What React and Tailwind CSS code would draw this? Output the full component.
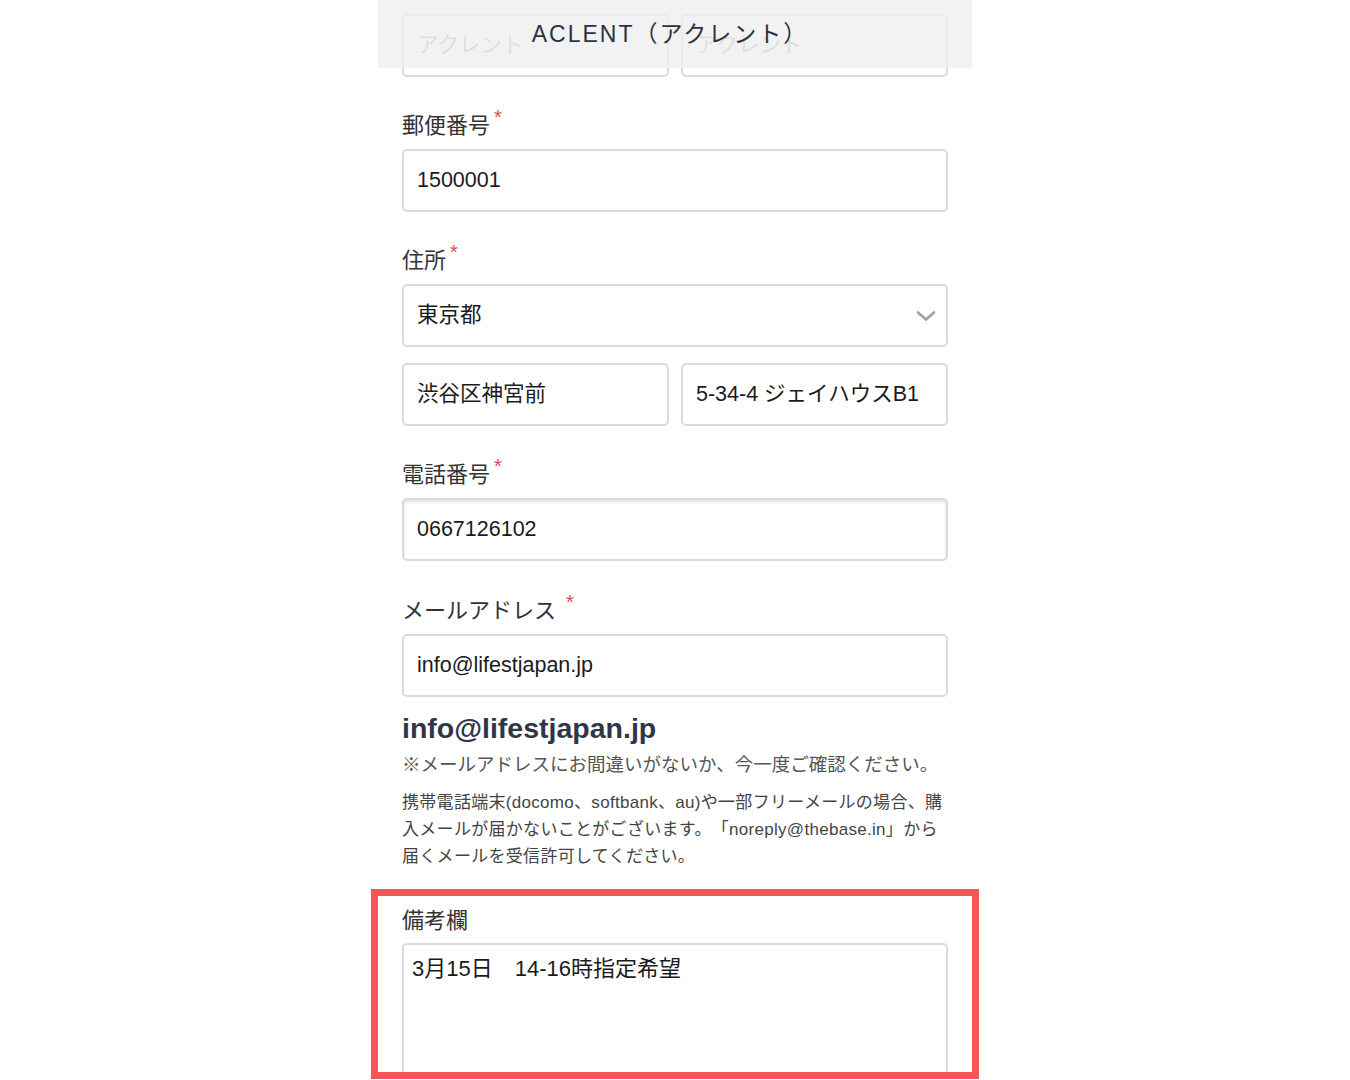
const font = { fontFamily: '"Liberation Sans", "Noto Sans CJK JP", sans-serif' };

const Label = ({ children, required, gap = false }) => (
  <div className="flex h-[30px] items-center text-[22px] leading-[30px] text-[#333333]">
    <span>{children}</span>
    {required && (
      <span className={`relative -top-[9px] text-[20px] text-[#e04b4b] ${gap ? "ml-[10px]" : "ml-[4px]"}`}>*</span>
    )}
  </div>
);

const Field = ({ value, placeholder, className = "", inset = false }) => (
  <div
    className={`flex h-[63px] items-center rounded-[5px] border-2 border-[#d7dae0] bg-white px-[13px] text-[21.5px] ${
      inset ? "shadow-[inset_0_2px_3px_rgba(0,0,0,0.12)]" : ""
    } ${className}`}
  >
    {value ? (
      <span className="text-[#1b1b1b]">{value}</span>
    ) : (
      <span className="text-[#9a9a9a]">{placeholder}</span>
    )}
  </div>
);

export default function App() {
  return (
    <div className="relative min-h-[1080px] w-full overflow-hidden bg-white" style={font}>
      <div className="mx-auto w-[594px] bg-white px-[24px]">
        <div className="-mt-[28px]">
          <div className="flex h-[30px] items-center text-[22px] text-[#333333]">氏名</div>
          <div className="mt-[12px] grid grid-cols-2 gap-[12px]">
            <Field placeholder="アクレント" />
            <Field placeholder="アクレント" />
          </div>
        </div>

        <div className="mt-[34px]">
          <Label required>郵便番号</Label>
          <div className="mt-[8px]">
            <Field value="1500001" />
          </div>
        </div>

        <div className="mt-[34px]">
          <Label required>住所</Label>
          <div className="mt-[8px]">
            <div className="flex h-[63px] items-center justify-between rounded-[5px] border-2 border-[#d7dae0] bg-white pl-[13px] pr-[9px] text-[21.5px] text-[#1b1b1b]">
              <span>東京都</span>
              <svg width="22" height="14" viewBox="0 0 22 14" fill="none">
                <path d="M3 3.5 L11 10.5 L19 3.5" stroke="#9ea3aa" strokeWidth="2.8" strokeLinecap="round" strokeLinejoin="round" />
              </svg>
            </div>
          </div>
          <div className="mt-[16px] grid grid-cols-2 gap-[12px]">
            <Field value="渋谷区神宮前" />
            <Field value="5-34-4 ジェイハウスB1" />
          </div>
        </div>

        <div className="mt-[34px]">
          <Label required>電話番号</Label>
          <div className="mt-[8px]">
            <Field value="0667126102" inset />
          </div>
        </div>

        <div className="mt-[35px]">
          <Label required gap>メールアドレス</Label>
          <div className="mt-[8px]">
            <Field value="info@lifestjapan.jp" />
          </div>
        </div>

        <div className="mt-[13px] text-[28.5px] font-bold leading-[36px] text-[#2f3747]">info@lifestjapan.jp</div>
        <div className="mt-[6px] text-[18.5px] leading-[26px] text-[#555555]">※メールアドレスにお間違いがないか、今一度ご確認ください。</div>
        <p className="mt-[11px] text-[17px] leading-[27px] tracking-[0.3px] text-[#444444] [text-spacing-trim:space-all]">
          携帯電話端末(docomo、softbank、au)や一部フリーメールの場合、購入メールが届かないことがございます。「noreply@thebase.in」から届くメールを受信許可してください。
        </p>

        <div className="-mx-[31px] mt-[19px] flex h-[190px] flex-col border-[7px] border-[#f65656] px-[24px] pt-[9px]">
          <div className="flex h-[30px] items-center text-[22px] text-[#333333]">備考欄</div>
          <div className="mt-[8px] flex-1 rounded-t-[5px] border-2 border-b-0 border-[#d7dae0] bg-white px-[8px] pt-[10px] text-[22px] leading-[28px] text-[#1b1b1b]">
            3月15日　14-16時指定希望
          </div>
        </div>
      </div>

      <div className="absolute left-1/2 top-0 flex h-[68px] w-[594px] -translate-x-1/2 items-center justify-center bg-[#efefef]/80">
        <span className="ml-[-10px] text-[23px] tracking-[2px] text-[#2b3240]">ACLENT（アクレント）</span>
      </div>
    </div>
  );
}
